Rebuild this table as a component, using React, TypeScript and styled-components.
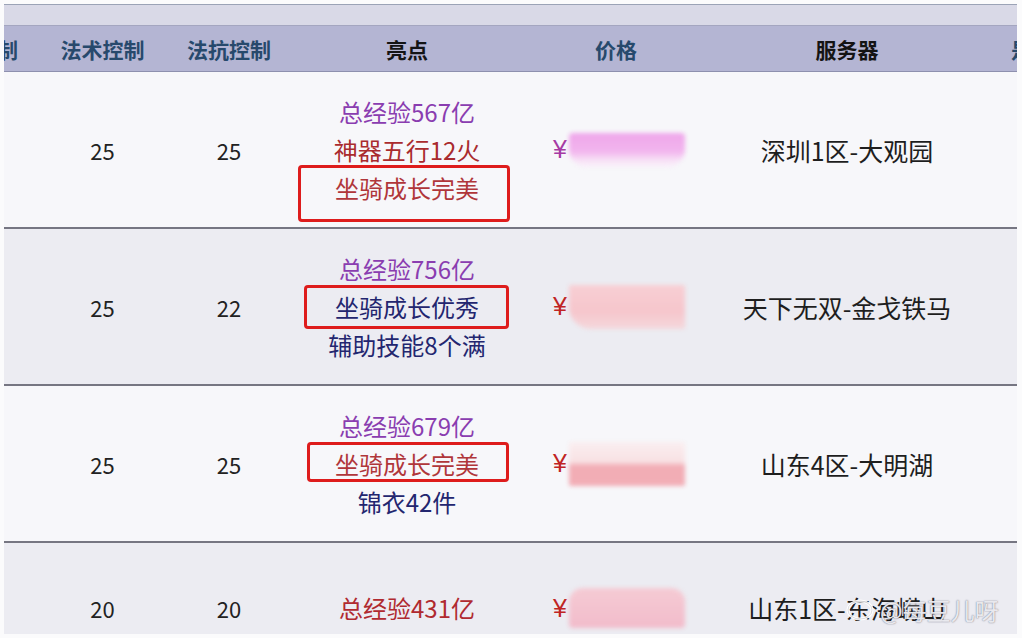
import React from "react";
import styled, { createGlobalStyle } from "styled-components";

const GlobalStyle = createGlobalStyle`
  html, body { margin: 0; padding: 0; background: #fbfbfc; }
  body { font-family: "Noto Sans CJK SC", "Noto Sans", sans-serif; overflow: hidden; }
`;

const COLS = "128px 125px 128px 228px 190px 272px 140px";

const Page = styled.div`
  position: relative;
  width: 1022px;
  height: 638px;
  overflow: hidden;
  background: #fbfbfc;
`;

const Frame = styled.div`
  margin-left: 4px;
  width: 1013px;
  height: 634px;
  overflow: hidden;
  padding-top: 4px;
  box-sizing: border-box;
`;

const TopBand = styled.div`
  height: 20px;
  background: #d9d9e7;
  border-top: 1px solid #9ba3b6;
  border-bottom: 1px solid #a4a6c0;
`;

const Table = styled.div`
  margin-left: -92px;
  width: 1211px;
`;

const HeaderRow = styled.div`
  display: grid;
  grid-template-columns: ${COLS};
  height: 45px;
  background: #b4b5d3;
  border-bottom: 1px solid #8e90ae;
`;

const HeadCell = styled.div<{ $dark?: boolean }>`
  display: flex;
  align-items: center;
  justify-content: center;
  font-size: 21px;
  font-weight: 700;
  color: ${(p) => (p.$dark ? "#141414" : "#27496c")};
  white-space: nowrap;
`;

const Row = styled.div<{ $bg: string; $h: number }>`
  display: grid;
  grid-template-columns: ${COLS};
  height: ${(p) => p.$h}px;
  background: ${(p) => p.$bg};
  border-bottom: 2px solid #767682;
`;

const Cell = styled.div`
  display: flex;
  align-items: center;
  justify-content: center;
  font-size: 22px;
  color: #222;
  white-space: nowrap;
`;

const Highlights = styled.div`
  display: flex;
  flex-direction: column;
  justify-content: center;
  align-items: stretch;
`;

const Line = styled.div<{ $color: string }>`
  position: relative;
  text-align: center;
  font-size: 24px;
  line-height: 38px;
  color: ${(p) => p.$color};
  white-space: nowrap;
`;

const Mark = styled.span<{ $t: number; $b: number; $l: number; $r: number }>`
  position: absolute;
  top: ${(p) => p.$t}px;
  bottom: ${(p) => p.$b}px;
  left: ${(p) => p.$l}px;
  right: ${(p) => p.$r}px;
  border: 3px solid #de1c1c;
  border-radius: 4px;
  pointer-events: none;
`;

const Price = styled.div`
  display: flex;
  align-items: center;
  justify-content: center;
  gap: 2px;
  padding-left: 6px;
`;

const Yen = styled.span<{ $color: string }>`
  font-size: 25px;
  line-height: 1;
  color: ${(p) => p.$color};
  font-family: "Liberation Sans", sans-serif;
`;

const Blur = styled.span<{ $bg: string; $h: number; $r: string }>`
  display: block;
  width: 116px;
  height: ${(p) => p.$h}px;
  background: ${(p) => p.$bg};
  border-radius: ${(p) => p.$r};
  filter: blur(2px);
`;

const Server = styled.div`
  display: flex;
  align-items: center;
  justify-content: center;
  font-size: 25px;
  color: #1e1e1e;
  white-space: nowrap;
`;

const Watermark = styled.div`
  position: absolute;
  left: 846px;
  top: 592px;
  display: flex;
  align-items: center;
  gap: 6px;
  font-size: 24px;
  color: rgba(240, 240, 245, 0.95);
  text-shadow: 0 0 1px rgba(70, 70, 90, 0.6), 0 0 2px rgba(70, 70, 90, 0.35);
  white-space: nowrap;
`;

const PURPLE = "#8a3db0";
const RED = "#a92b2e";
const NAVY = "#23266f";

type MarkBox = { t: number; b: number; l: number; r: number };
type LineData = { text: string; color: string; mark?: MarkBox };
type RowData = {
  a: string;
  b: string;
  lines: LineData[];
  yen: string;
  blur: { bg: string; h: number; r: string };
  server: string;
  bg: string;
  h: number;
};

const rows: RowData[] = [
  {
    a: "25",
    b: "25",
    lines: [
      { text: "总经验567亿", color: PURPLE },
      { text: "神器五行12火", color: RED },
      { text: "坐骑成长完美", color: "#b0363a", mark: { t: -4, b: -15, l: 5, r: 11 } },
    ],
    yen: "#a63aa4",
    blur: {
      bg: "linear-gradient(180deg, #efa6ea 0%, #f2b6ee 55%, #f7e2f6 80%, #faf0fa 100%)",
      h: 34,
      r: "4px 4px 18px 18px",
    },
    server: "深圳1区-大观园",
    bg: "#f7f7fa",
    h: 155,
  },
  {
    a: "25",
    b: "22",
    lines: [
      { text: "总经验756亿", color: PURPLE },
      { text: "坐骑成长优秀", color: NAVY, mark: { t: -3, b: -3, l: 11, r: 12 } },
      { text: "辅助技能8个满", color: NAVY },
    ],
    yen: "#c02424",
    blur: {
      bg: "linear-gradient(180deg, #f8cfd4 0%, #f6c6cc 60%, #f4d8dc 100%)",
      h: 44,
      r: "2px 2px 2px 22px",
    },
    server: "天下无双-金戈铁马",
    bg: "#ececf2",
    h: 155,
  },
  {
    a: "25",
    b: "25",
    lines: [
      { text: "总经验679亿", color: PURPLE },
      { text: "坐骑成长完美", color: "#b0363a", mark: { t: -3, b: 1, l: 14, r: 12 } },
      { text: "锦衣42件", color: NAVY },
    ],
    yen: "#c02424",
    blur: {
      bg: "linear-gradient(180deg, #faeef0 0%, #f8e2e4 45%, #f2adb5 55%, #f2aeb6 100%)",
      h: 44,
      r: "2px",
    },
    server: "山东4区-大明湖",
    bg: "#f7f7fa",
    h: 155,
  },
  {
    a: "20",
    b: "20",
    lines: [{ text: "总经验431亿", color: "#b02a30" }],
    yen: "#c02424",
    blur: {
      bg: "linear-gradient(180deg, #f5cbd4 0%, #f2bccb 100%)",
      h: 40,
      r: "14px 14px 4px 4px",
    },
    server: "山东1区-东海崂山",
    bg: "#ececf2",
    h: 130,
  },
];

const headers: { label: string; dark?: boolean }[] = [
  { label: "物理控制" },
  { label: "法术控制" },
  { label: "法抗控制" },
  { label: "亮点", dark: true },
  { label: "价格" },
  { label: "服务器", dark: true },
  { label: "是否议价" },
];

export default function App() {
  return (
    <Page>
      <GlobalStyle />
      <Frame>
        <TopBand />
        <Table>
          <HeaderRow>
            {headers.map((h) => (
              <HeadCell key={h.label} $dark={h.dark}>
                {h.label}
              </HeadCell>
            ))}
          </HeaderRow>
          {rows.map((r, i) => (
            <Row key={i} $bg={r.bg} $h={r.h}>
              <Cell />
              <Cell>{r.a}</Cell>
              <Cell>{r.b}</Cell>
              <Highlights>
                {r.lines.map((l) => (
                  <Line key={l.text} $color={l.color}>
                    {l.text}
                    {l.mark && <Mark $t={l.mark.t} $b={l.mark.b} $l={l.mark.l} $r={l.mark.r} />}
                  </Line>
                ))}
              </Highlights>
              <Price>
                <Yen $color={r.yen}>¥</Yen>
                <Blur $bg={r.blur.bg} $h={r.blur.h} $r={r.blur.r} />
              </Price>
              <Server>{r.server}</Server>
              <Cell />
            </Row>
          ))}
        </Table>
      </Frame>
      <Watermark>
        <svg width="28" height="22" viewBox="0 0 28 22">
          <ellipse cx="14" cy="11" rx="12" ry="9" fill="none" stroke="rgba(255,255,255,0.92)" strokeWidth="3" />
          <ellipse cx="14" cy="11" rx="12" ry="9" fill="none" stroke="rgba(70,70,90,0.3)" strokeWidth="0.6" />
        </svg>
        <span>@每豆儿呀</span>
      </Watermark>
    </Page>
  );
}
